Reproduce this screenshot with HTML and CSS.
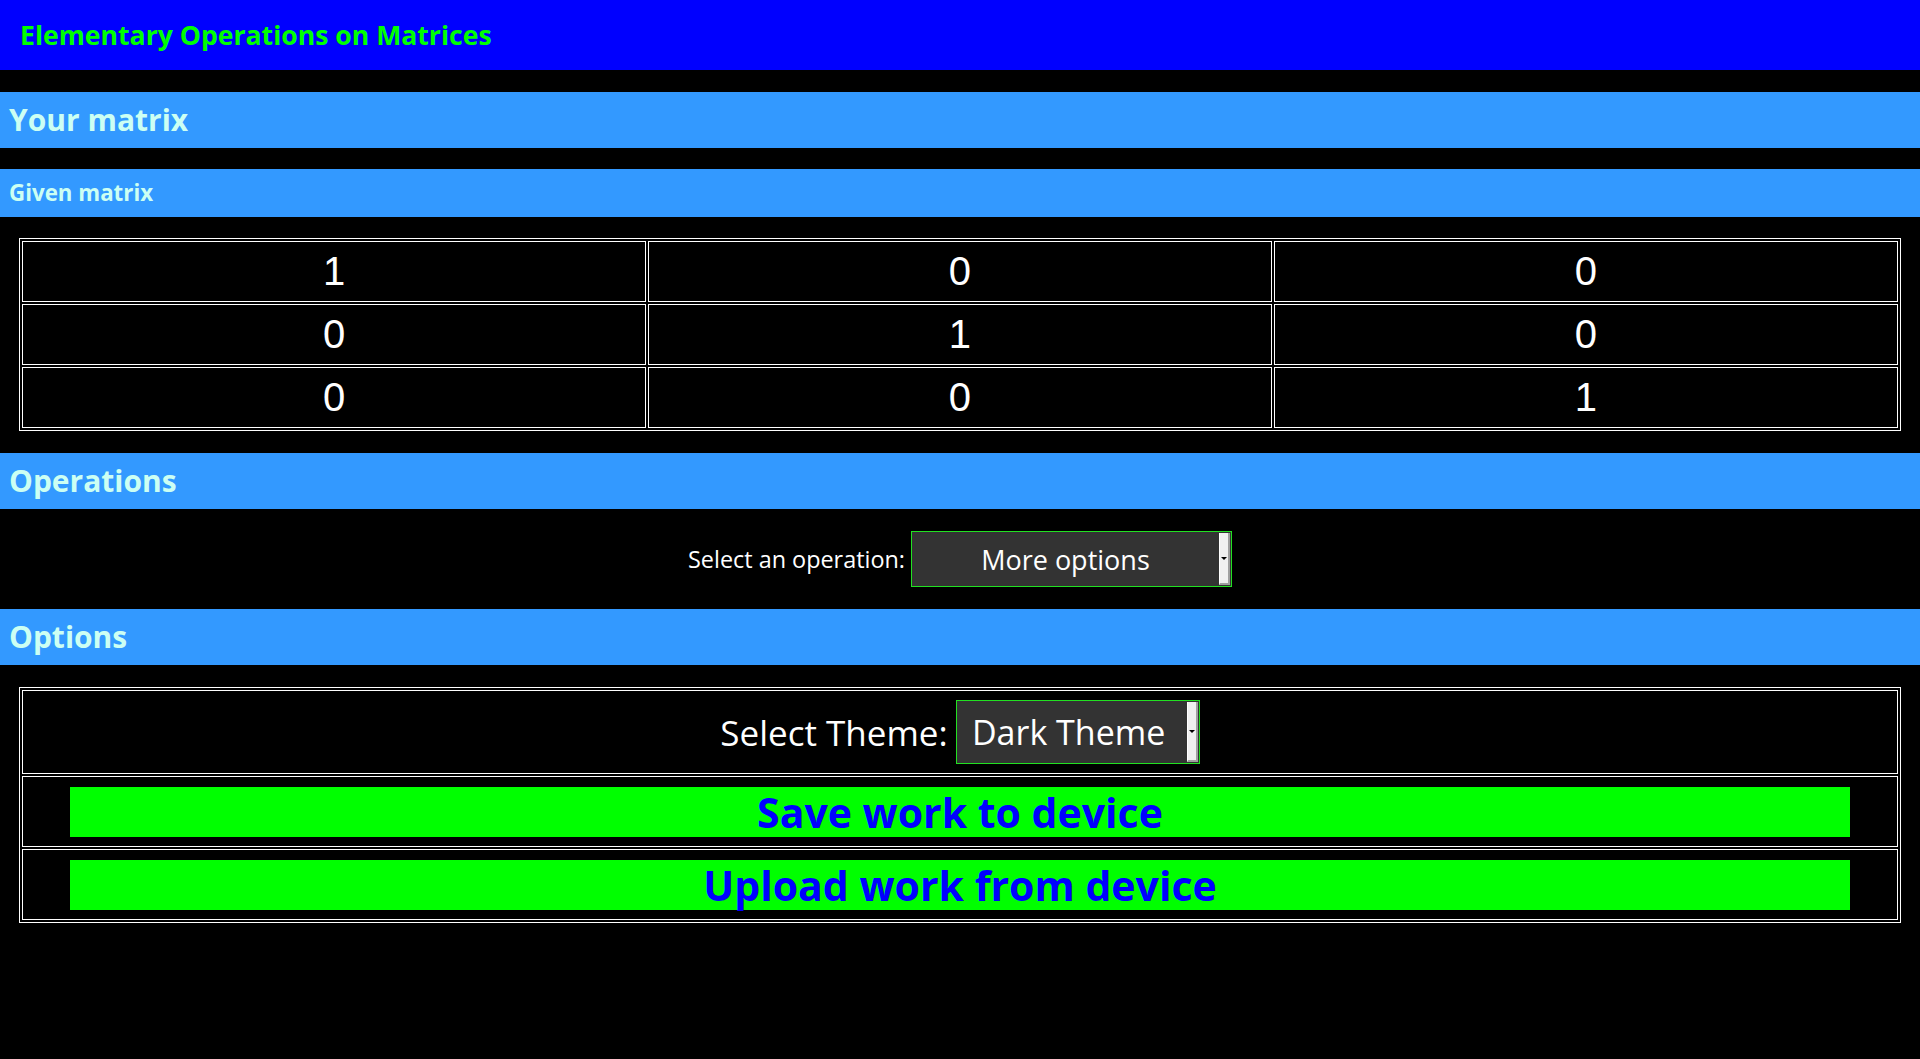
FILE: index.html
```html
<!DOCTYPE html>
<html lang="en">
<head>
<meta charset="utf-8">
<title>Elementary Operations on Matrices</title>
<link rel="stylesheet" href="styles.css">
</head>
<body>
<header class="topbar">
  <h1 class="app-title">Elementary Operations on Matrices</h1>
</header>

<h2 class="section-bar">Your matrix</h2>
<h3 class="sub-bar">Given matrix</h3>

<table class="matrix">
  <tr><td>1</td><td>0</td><td>0</td></tr>
  <tr><td>0</td><td>1</td><td>0</td></tr>
  <tr><td>0</td><td>0</td><td>1</td></tr>
</table>

<h2 class="section-bar">Operations</h2>
<div class="op-row">
  <label class="op-label" for="op">Select an operation:</label>
  <div class="select-box op-select">
    <select id="op" class="select-input op-input">
      <option>More options</option>
    </select>
    <span class="select-strip"><span class="select-arrow"></span></span>
  </div>
</div>

<h2 class="section-bar section-bar--flush">Options</h2>
<table class="options">
  <tr>
    <td class="theme-cell">
      <div class="theme-row">
        <label class="theme-label" for="theme">Select Theme:</label>
        <div class="select-box theme-select">
          <select id="theme" class="select-input theme-input">
            <option>Dark Theme</option>
          </select>
          <span class="select-strip"><span class="select-arrow"></span></span>
        </div>
      </div>
    </td>
  </tr>
  <tr><td class="btn-cell"><button class="big-btn">Save work to device</button></td></tr>
  <tr><td class="btn-cell"><button class="big-btn">Upload work from device</button></td></tr>
</table>
</body>
</html>
```
FILE: styles.css
```css
html, body {
  margin: 0;
  padding: 0;
  background: #000;
}
body {
  font-family: "Open Sans", "Noto Sans", sans-serif;
  color: #fff;
}

.topbar {
  height: 70px;
  background: #0000ff;
  display: flex;
  align-items: center;
  padding-left: 20px;
}
.app-title {
  margin: 0;
  font-size: 26.6px;
  font-weight: 700;
  color: #00ff00;
  line-height: 1;
}

.section-bar {
  margin: 22px 0 0;
  height: 56px;
  background: #3399ff;
  color: #ccfff3;
  font-size: 30px;
  font-weight: 700;
  display: flex;
  align-items: center;
  padding-left: 9px;
  line-height: 1;
}
.section-bar--flush {
  margin-top: 0;
}
.sub-bar {
  margin: 21px 0 0;
  height: 48px;
  background: #3399ff;
  color: #ccfff3;
  font-size: 22.3px;
  font-weight: 700;
  display: flex;
  align-items: center;
  padding-left: 9px;
  line-height: 1;
}

.matrix {
  width: 98%;
  margin: 21px auto 0;
  table-layout: fixed;
  border: 1px solid #fff;
  border-spacing: 2px;
}
.matrix td {
  border: 1px solid #fff;
  padding: 6px 0;
  line-height: 47px;
  text-align: center;
  font-family: "Liberation Sans", Arial, sans-serif;
  font-size: 40px;
  color: #fff;
}

.op-row {
  display: flex;
  justify-content: center;
  align-items: center;
  gap: 6px;
  padding: 22px 0;
}
.op-label {
  font-size: 23.4px;
  color: #fff;
}

.select-box {
  display: flex;
  align-items: stretch;
  box-sizing: border-box;
  border: 1px solid #22e022;
  background: #333;
}
.op-select {
  width: 321px;
  height: 56px;
}
.theme-select {
  width: 244px;
  height: 64px;
}
.select-input {
  flex: 1;
  min-width: 0;
  appearance: none;
  -webkit-appearance: none;
  border: none;
  outline: none;
  background: transparent;
  color: #fff;
  font-family: "Open Sans", "Noto Sans", sans-serif;
  text-align: center;
  text-align-last: center;
  padding: 0;
  margin: 0;
}
.op-input {
  font-size: 27px;
}
.theme-input {
  font-size: 34px;
  padding-right: 6px;
}
.select-strip {
  width: 11px;
  margin: 1px 1px 1px 0;
  box-sizing: border-box;
  background: #f0f0f0;
  border-right: 2px solid #a0a0a0;
  border-bottom: 2px solid #a0a0a0;
  border-left: 1px solid #fff;
  display: flex;
  align-items: center;
  justify-content: center;
}
.select-arrow {
  width: 0;
  height: 0;
  border-left: 3px solid transparent;
  border-right: 3px solid transparent;
  border-top: 3px solid #000;
}

.options {
  width: 98%;
  margin: 22px auto 0;
  border: 1px solid #fff;
  border-spacing: 2px;
}
.options td {
  border: 1px solid #fff;
  text-align: center;
}
.theme-cell {
  padding: 9px 0;
}
.theme-row {
  display: flex;
  justify-content: center;
  align-items: center;
  gap: 8px;
}
.theme-label {
  font-size: 35px;
  color: #fff;
}
.btn-cell {
  padding: 10px 0 9px;
}
.big-btn {
  display: block;
  width: 95%;
  height: 50px;
  margin: 0 auto;
  padding: 0;
  border: none;
  background: #00ff00;
  color: #0000ff;
  font-family: "Open Sans", "Noto Sans", sans-serif;
  font-size: 41px;
  font-weight: 700;
  line-height: 50px;
  cursor: pointer;
}
```
